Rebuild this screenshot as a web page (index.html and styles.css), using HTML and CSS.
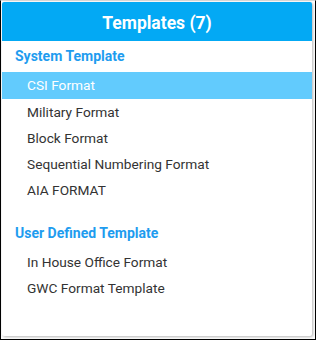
FILE: index.html
```html
<!DOCTYPE html>
<html lang="en">
<head>
    <meta charset="UTF-8">
    <meta name="viewport" content="width=device-width, initial-scale=1.0">
    <title>Templates</title>
    <link rel="stylesheet" href="styles.css">
</head>
<body>
    <div class="frame">
        <div class="card">
            <div class="header">
                <h1>Templates (7)</h1>
            </div>

            <div class="group">
                <h2>System Template</h2>
                <ul class="list">
                    <li class="active">CSI Format</li>
                    <li>Military Format</li>
                    <li>Block Format</li>
                    <li>Sequential Numbering Format</li>
                    <li>AIA FORMAT</li>
                </ul>
            </div>

            <div class="group">
                <h2>User Defined Template</h2>
                <ul class="list">
                    <li>In House Office Format</li>
                    <li>GWC Format Template</li>
                </ul>
            </div>
        </div>
    </div>
</body>
</html>
```

FILE: styles.css
```css
* {
    margin: 0;
    padding: 0;
    box-sizing: border-box;
}

body {
    font-family: Roboto, 'Liberation Sans', sans-serif;
    background: #fff;
}

.frame {
    width: 316px;
    height: 340px;
    border: 1px solid #000;
    border-top-color: #d8d8d8;
    padding: 1px 3px 3px 1px;
}

.card {
    height: 100%;
    background: #fff;
    border-radius: 2px;
    box-shadow: 1px 1px 3px rgba(0, 0, 0, 0.3);
    overflow: hidden;
}

.header {
    background: #03a9f4;
    height: 39px;
    padding-top: 2px;
    display: flex;
    align-items: center;
    justify-content: center;
}

.header h1 {
    color: #fff;
    font-size: 17.5px;
    font-weight: bold;
}

.group h2 {
    color: #1e9cef;
    font-size: 14px;
    font-weight: bold;
    padding: 0 13px;
    height: 31px;
    line-height: 31px;
}

.list {
    list-style: none;
}

.list li {
    height: 26px;
    line-height: 26px;
    padding-left: 25px;
    font-size: 13.7px;
    color: #333;
}

.list li.active {
    height: 27px;
    line-height: 27px;
    background: #62cbfd;
    color: #fff;
}

.group + .group {
    margin-top: 15px;
}
```
